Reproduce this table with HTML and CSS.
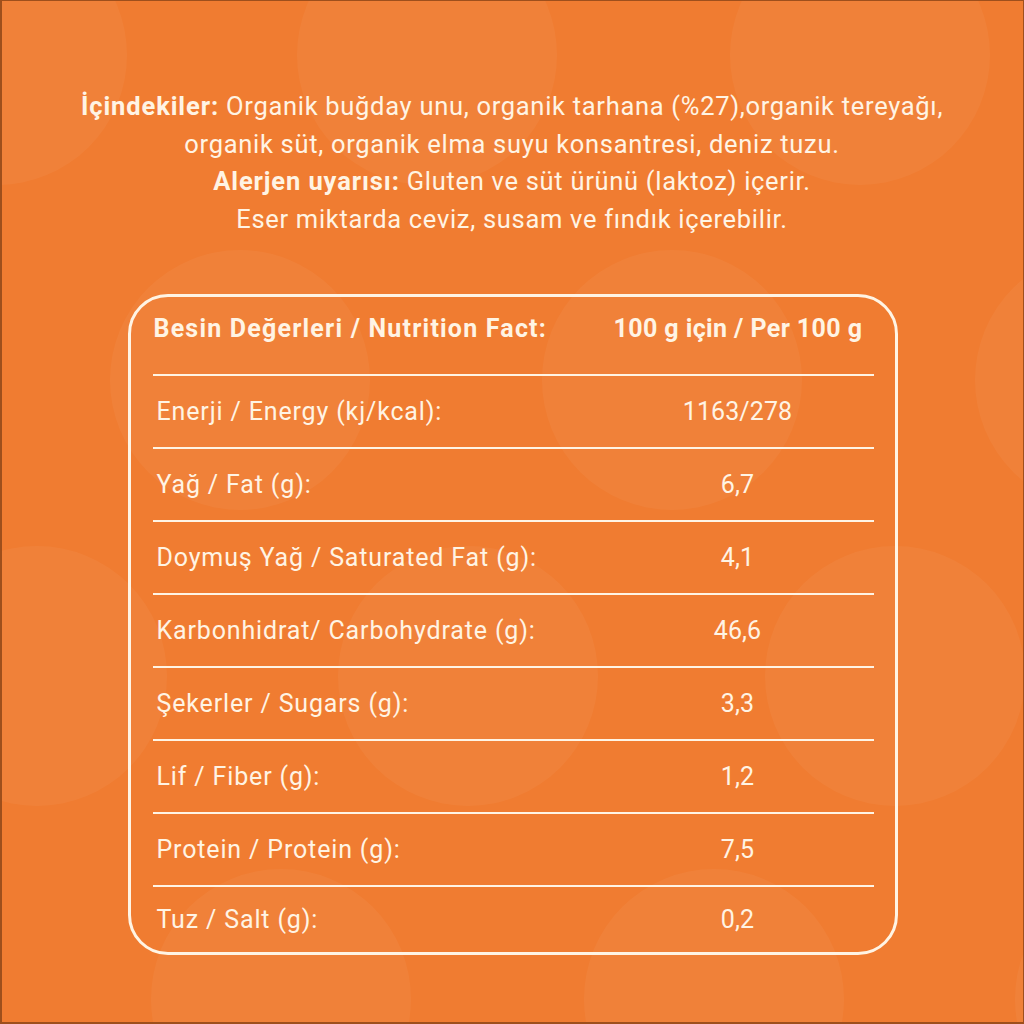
FILE: index.html
```html
<!DOCTYPE html>
<html lang="tr">
<head>
<meta charset="utf-8">
<title>Besin Değerleri</title>
<link rel="stylesheet" href="styles.css">
</head>
<body>
<main class="page">
  <div class="bg" aria-hidden="true">
    <span class="dot" style="left:-133px;top:-75px"></span>
    <span class="dot" style="left:297px;top:-75px"></span>
    <span class="dot" style="left:730px;top:-75px"></span>
    <span class="dot" style="left:110px;top:250px"></span>
    <span class="dot" style="left:542px;top:250px"></span>
    <span class="dot" style="left:975px;top:250px"></span>
    <span class="dot" style="left:-93px;top:546px"></span>
    <span class="dot" style="left:338px;top:546px"></span>
    <span class="dot" style="left:765px;top:546px"></span>
    <span class="dot" style="left:151px;top:869px"></span>
    <span class="dot" style="left:584px;top:869px"></span>
    <span class="dot" style="left:1015px;top:869px"></span>
  </div>

  <section class="ingredients">
    <p><b>İçindekiler:</b> Organik buğday unu, organik tarhana (%27),organik tereyağı,<br>
    organik süt, organik elma suyu konsantresi, deniz tuzu.<br>
    <b>Alerjen uyarısı:</b> Gluten ve süt ürünü (laktoz) içerir.<br>
    Eser miktarda ceviz, susam ve fındık içerebilir.</p>
  </section>

  <section class="facts">
    <div class="row head">
      <span class="label">Besin Değerleri / Nutrition Fact:</span>
      <span class="value">100 g için / Per 100 g</span>
    </div>
    <div class="row"><span class="label">Enerji / Energy (kj/kcal):</span><span class="value">1163/278</span></div>
    <div class="row"><span class="label">Yağ / Fat (g):</span><span class="value">6,7</span></div>
    <div class="row"><span class="label">Doymuş Yağ / Saturated Fat (g):</span><span class="value">4,1</span></div>
    <div class="row"><span class="label">Karbonhidrat/ Carbohydrate (g):</span><span class="value">46,6</span></div>
    <div class="row"><span class="label">Şekerler / Sugars (g):</span><span class="value">3,3</span></div>
    <div class="row"><span class="label">Lif / Fiber (g):</span><span class="value">1,2</span></div>
    <div class="row"><span class="label">Protein / Protein (g):</span><span class="value">7,5</span></div>
    <div class="row last"><span class="label">Tuz / Salt (g):</span><span class="value">0,2</span></div>
  </section>
</main>
</body>
</html>
```
FILE: styles.css
```css
* { box-sizing: border-box; }

html, body {
  margin: 0;
  padding: 0;
}

body {
  width: 1024px;
  height: 1024px;
  overflow: hidden;
  background: #f07c31;
}

.page {
  position: relative;
  width: 1024px;
  height: 1024px;
  background: #f07c31;
  color: #fff4e4;
  font-family: Roboto, "Liberation Sans", "DejaVu Sans", sans-serif;
  padding-top: 88px;
  display: flex;
  flex-direction: column;
  align-items: center;
  overflow: hidden;
}

.page::after {
  content: "";
  position: absolute;
  inset: 0;
  border-style: solid;
  border-color: #9e4f1c;
  border-width: 1px 1px 2px 2px;
  pointer-events: none;
  z-index: 3;
}

.bg {
  position: absolute;
  inset: 0;
  z-index: 0;
}

.dot {
  position: absolute;
  width: 260px;
  height: 260px;
  border-radius: 50%;
  background: rgba(255, 255, 255, 0.045);
}

.ingredients {
  position: relative;
  z-index: 1;
  width: 100%;
}

.ingredients p {
  margin: 0;
  text-align: center;
  font-size: 25.5px;
  line-height: 37.6px;
  letter-spacing: 0.7px;
}

.ingredients b {
  font-weight: 700;
  letter-spacing: 0.9px;
}

.facts {
  position: relative;
  z-index: 1;
  margin-top: 56px;
  margin-left: 1px;
  width: 770px;
  height: 661px;
  border: 3px solid #fff4e4;
  border-radius: 40px;
  padding: 0 21px 0 22px;
  display: flex;
  flex-direction: column;
}

.row {
  display: grid;
  grid-template-columns: 1fr 248px;
  align-items: center;
  height: 73px;
  border-top: 2px solid #fff4e4;
  padding: 0 12px 0 4px;
  font-size: 25px;
  line-height: 30px;
}

.label {
  letter-spacing: 0.85px;
  white-space: nowrap;
}

.value {
  text-align: center;
  letter-spacing: 0.1px;
  white-space: nowrap;
}

.row.head {
  border-top: none;
  height: 77px;
  padding: 0 12px 14px 1px;
  font-weight: 700;
}

.row.head .label {
  letter-spacing: 1.2px;
}

.row.head .value {
  letter-spacing: 0.4px;
}

.row.last {
  height: 67px;
}
```
